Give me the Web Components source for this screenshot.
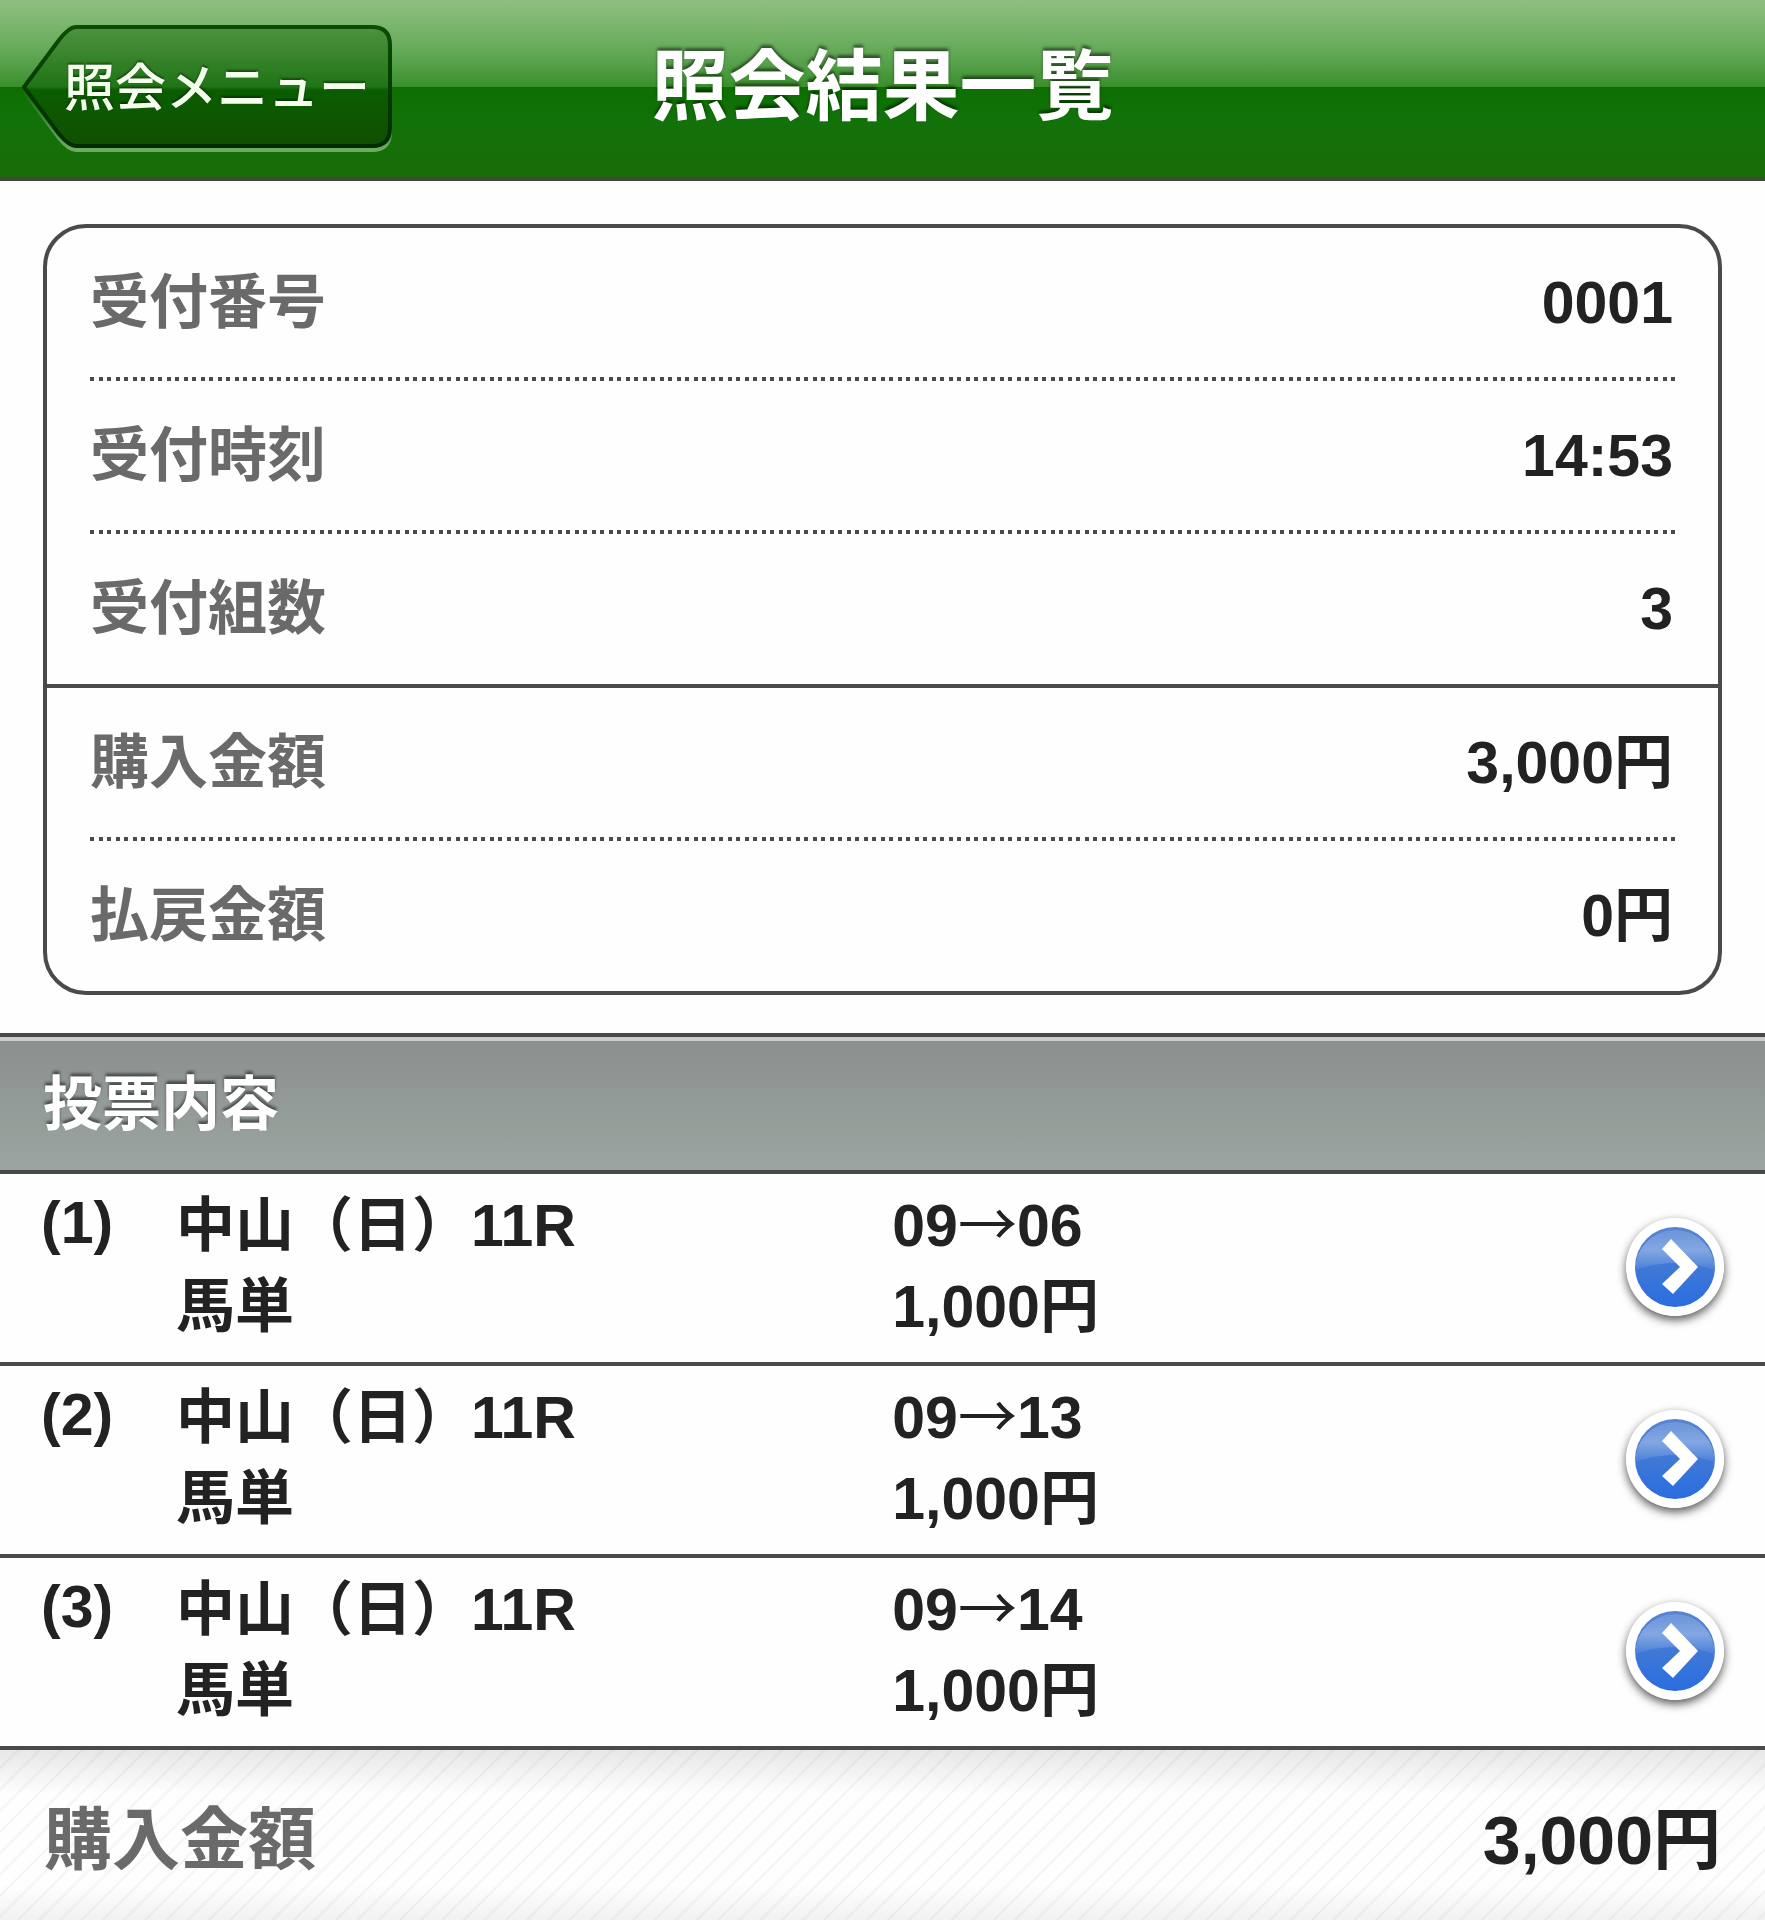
<!DOCTYPE html>
<html lang="ja">
<head>
<meta charset="UTF-8">
<meta name="viewport" content="width=device-width, initial-scale=1">
<title>照会結果一覧</title>
<style>
    html, body {
        margin: 0;
        min-height: 100%;
    }

    body {
        background: #fefefe;
        color: #222;
        font-family: "Liberation Sans", "Noto Sans CJK JP", sans-serif;
        font-size: 59px;
        font-weight: bold;
        line-height: 80px;
    }
</style>
</head>
<body>
<result-page>
    <app-header slot="header">
        <back-button slot="back">照会メニュー</back-button>
        照会結果一覧
    </app-header>
    <summary-card>
        <summary-row label="受付番号">0001</summary-row>
        <summary-row label="受付時刻">14:53</summary-row>
        <summary-row label="受付組数" line="solid">3</summary-row>
        <summary-row label="購入金額">3,000円</summary-row>
        <summary-row label="払戻金額" line="none">0円</summary-row>
    </summary-card>
    <section-title>投票内容</section-title>
    <bet-row number="(1)" race="中山（日）11R" kind="馬単" from="09" to="06" amount="1,000円"></bet-row>
    <bet-row number="(2)" race="中山（日）11R" kind="馬単" from="09" to="13" amount="1,000円"></bet-row>
    <bet-row number="(3)" race="中山（日）11R" kind="馬単" from="09" to="14" amount="1,000円"></bet-row>
    <total-bar slot="footer" label="購入金額">3,000円</total-bar>
</result-page>

<script>
class BaseElement extends HTMLElement {
    constructor() {
        super();
        this.attachShadow({ mode: 'open' });
    }

    connectedCallback() {
        const template = document.createElement('template');
        template.innerHTML = `${this.getStyles()}${this.getTemplate()}`;
        this.shadowRoot.appendChild(template.content.cloneNode(true));
    }

    attr(name) {
        return this.getAttribute(name) || '';
    }
}

class ResultPage extends BaseElement {
    getTemplate() {
        return `
            <slot name="header"></slot>
            <main><slot></slot></main>
            <slot name="footer"></slot>
        `;
    }

    getStyles() {
        return `
        <style>
        :host {
            display: flex;
            flex-direction: column;
            min-height: 100vh;
        }
        </style>
        `;
    }
}

class AppHeader extends BaseElement {
    getTemplate() {
        return `
            <header>
                <slot name="back"></slot>
                <h1><slot></slot></h1>
            </header>
        `;
    }

    getStyles() {
        return `
        <style>
        :host {
            display: block;
        }

        header {
            display: grid;
            grid-template-columns: 1fr auto 1fr;
            align-items: center;
            height: 177px;
            padding: 0 22px;
            border-bottom: 4px solid #3e4a3c;
            background: linear-gradient(#8fbe81 0, #6fb062 40px, #56a04a 64px, #3a8f2b 87px, #0d6f02 87px, #12720a 120px, #1a6b06 100%);
        }

        h1 {
            margin: 0;
            padding-bottom: 4px;
            color: #fff;
            font-size: 77px;
            line-height: 96px;
            text-shadow: 0 -3px 3px rgba(0, 0, 0, 0.5);
        }
        </style>
        `;
    }
}

class BackButton extends BaseElement {
    getTemplate() {
        const shape = 'M2 62 L37 15 Q47 2 54 2 H350 Q368 2 368 20 V103 Q368 121 350 121 H54 Q47 121 37 109 Z';
        return `
            <button type="button">
                <svg viewBox="0 0 370 128" aria-hidden="true">
                    <defs>
                        <linearGradient id="face" x1="0" y1="0" x2="0" y2="1">
                            <stop offset="0" stop-color="#4f923f"/>
                            <stop offset="0.5" stop-color="#207516"/>
                            <stop offset="0.53" stop-color="#0b5d00"/>
                            <stop offset="1" stop-color="#104f00"/>
                        </linearGradient>
                        <linearGradient id="edge" x1="0" y1="0" x2="0" y2="1">
                            <stop offset="0" stop-color="#0b4d04"/>
                            <stop offset="1" stop-color="#022b00"/>
                        </linearGradient>
                        <linearGradient id="glow" x1="0" y1="0" x2="0" y2="1">
                            <stop offset="0.5" stop-color="#6fac62" stop-opacity="0"/>
                            <stop offset="1" stop-color="#6fac62"/>
                        </linearGradient>
                    </defs>
                    <path d="${shape}" transform="translate(0 4)" fill="none" stroke="url(#glow)" stroke-width="4"/>
                    <path d="${shape}" fill="url(#face)" stroke="url(#edge)" stroke-width="4" stroke-linejoin="round"/>
                </svg>
                <span><slot></slot></span>
            </button>
        `;
    }

    getStyles() {
        return `
        <style>
        :host {
            display: block;
            justify-self: start;
        }

        button {
            display: grid;
            align-items: center;
            padding: 0;
            border: none;
            background: none;
            color: #f4ffee;
            font-family: inherit;
            font-size: 51px;
            font-weight: 500;
            line-height: 64px;
            cursor: pointer;
        }

        svg, span {
            grid-area: 1 / 1;
        }

        svg {
            display: block;
            width: 370px;
            height: 128px;
        }

        span {
            padding: 0 20px 0 42px;
            text-align: left;
            text-shadow: 0 -2px 2px rgba(0, 0, 0, 0.4);
            white-space: nowrap;
        }
        </style>
        `;
    }
}

class SummaryCard extends BaseElement {
    getTemplate() {
        return `<section><slot></slot></section>`;
    }

    getStyles() {
        return `
        <style>
        :host {
            display: block;
            padding: 43px 43px 38px;
        }

        section {
            border: 4px solid #4a4a4a;
            border-radius: 43px;
            background: #fefefe;
        }
        </style>
        `;
    }
}

class SummaryRow extends BaseElement {
    getTemplate() {
        return `
            <dl>
                <dt>${this.attr('label')}</dt>
                <dd><slot></slot></dd>
            </dl>
        `;
    }

    getStyles() {
        return `
        <style>
        :host {
            --dash: #4a4a4a;
            display: block;
            padding: 0 43px;
        }

        :host([line="solid"]) {
            padding: 0;
        }

        dl {
            display: flex;
            justify-content: space-between;
            box-sizing: border-box;
            height: 153px;
            margin: 0;
            padding: 35px 2px 0 0;
            background: repeating-linear-gradient(90deg, var(--dash) 0 4px, transparent 4px 9px, var(--dash) 9px 13px, transparent 13px 17px) bottom / 100% 4px no-repeat;
        }

        :host([line="solid"]) dl {
            height: 154px;
            padding: 35px 45px 0 43px;
            background: linear-gradient(#4a4a4a, #4a4a4a) bottom / 100% 4px no-repeat;
        }

        :host([line="none"]) dl {
            height: 150px;
            background: none;
        }

        dt {
            color: #6a6a6a;
        }

        dd {
            margin: 0;
        }
        </style>
        `;
    }
}

class SectionTitle extends BaseElement {
    getTemplate() {
        return `<h2><slot></slot></h2>`;
    }

    getStyles() {
        return `
        <style>
        :host {
            display: block;
            border-top: 4px solid #4a4a4a;
            border-bottom: 4px solid #464a48;
        }

        h2 {
            margin: 0;
            padding: 24px 43px 25px;
            border-top: 4px solid #c9cecb;
            background: linear-gradient(#8a908d, #9ca5a1);
            color: #fff;
            font-size: 59px;
            text-shadow: 0 -3px 3px rgba(0, 0, 0, 0.5);
        }
        </style>
        `;
    }
}

class BetRow extends BaseElement {
    getTemplate() {
        return `
            <article>
                <div class="number">${this.attr('number')}</div>
                <div class="race">
                    <div>${this.attr('race')}</div>
                    <div>${this.attr('kind')}</div>
                </div>
                <div class="bet">
                    <div>${this.attr('from')}<span class="arrow">→</span>${this.attr('to')}</div>
                    <div>${this.attr('amount')}</div>
                </div>
                <a href="#" aria-label="詳細">
                    <svg viewBox="0 0 98 98" aria-hidden="true">
                        <defs>
                            <linearGradient id="ball" x1="0" y1="0" x2="0" y2="1">
                                <stop offset="0" stop-color="#5585d2"/>
                                <stop offset="0.5" stop-color="#3f78d6"/>
                                <stop offset="1" stop-color="#2a6de0"/>
                            </linearGradient>
                            <linearGradient id="gloss" x1="0" y1="0" x2="0" y2="1">
                                <stop offset="0" stop-color="#fff" stop-opacity="0.14"/>
                                <stop offset="0.5" stop-color="#fff" stop-opacity="0.32"/>
                                <stop offset="1" stop-color="#fff" stop-opacity="0.06"/>
                            </linearGradient>
                        </defs>
                        <circle cx="49" cy="49" r="49" fill="#fff"/>
                        <circle cx="49" cy="49" r="40" fill="url(#ball)"/>
                        <path d="M9 52 A40 40 0 1 1 89 52 Q49 38 9 52 Z" fill="url(#gloss)"/>
                        <path d="M45 21 L72 49 L47 76 L36 66 L54 49 L36 31 Z" fill="#fff"/>
                    </svg>
                </a>
            </article>
        `;
    }

    getStyles() {
        return `
        <style>
        :host {
            display: block;
            border-bottom: 4px solid #4a4a4a;
            background: #fefefe;
        }

        article {
            display: grid;
            grid-template-columns: 135px 41fr 42fr auto;
            align-items: start;
            padding: 12px 41px 14px;
            line-height: 81px;
        }

        .number {
            line-height: 74px;
        }

        .arrow {
            font-family: "Noto Sans CJK JP", sans-serif;
            font-weight: normal;
            line-height: 1;
        }

        a {
            align-self: center;
        }

        svg {
            display: block;
            width: 98px;
            height: 98px;
            border-radius: 50%;
            box-shadow: 0 4px 10px rgba(0, 0, 0, 0.65);
        }
        </style>
        `;
    }
}

class TotalBar extends BaseElement {
    getTemplate() {
        return `
            <dl>
                <dt>${this.attr('label')}</dt>
                <dd><slot></slot></dd>
            </dl>
        `;
    }

    getStyles() {
        return `
        <style>
        :host {
            display: flex;
            flex-direction: column;
            flex: 1;
            background:
                linear-gradient(rgba(0, 0, 0, 0.09), transparent 44px, transparent calc(100% - 36px), rgba(0, 0, 0, 0.05)),
                repeating-linear-gradient(135deg, #fefefe 0 11px, #f3f3f3 13px, #fefefe 15px);
        }

        dl {
            display: flex;
            justify-content: space-between;
            margin: 0;
            padding: 45px 44px 36px;
            font-size: 68px;
            line-height: 90px;
        }

        dt {
            color: #6a6a6a;
        }

        dd {
            margin: 0;
        }
        </style>
        `;
    }
}

customElements.define('result-page', ResultPage);
customElements.define('app-header', AppHeader);
customElements.define('back-button', BackButton);
customElements.define('summary-card', SummaryCard);
customElements.define('summary-row', SummaryRow);
customElements.define('section-title', SectionTitle);
customElements.define('bet-row', BetRow);
customElements.define('total-bar', TotalBar);
</script>
</body>
</html>
